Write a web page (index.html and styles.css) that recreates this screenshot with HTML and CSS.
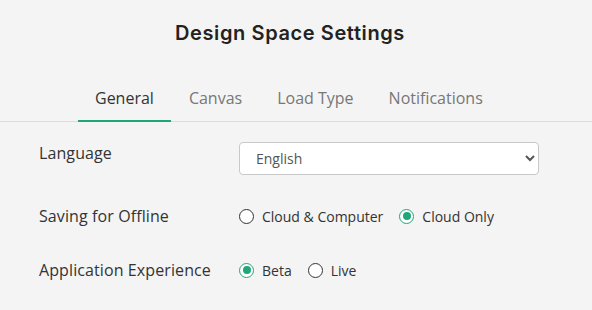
FILE: index.html
```html
<!DOCTYPE html>
<html lang="en">
<head>
<meta charset="utf-8">
<title>Design Space Settings</title>
<link rel="stylesheet" href="styles.css">
</head>
<body>
<div class="page">
  <h1 class="title">Design Space Settings</h1>
  <nav class="tabs">
    <a class="tab tab-active">General</a>
    <a class="tab">Canvas</a>
    <a class="tab">Load Type</a>
    <a class="tab">Notifications</a>
  </nav>
  <form class="form">
    <div class="row row-lang">
      <label class="label label-top" for="lang">Language</label>
      <select id="lang" class="select">
        <option>English</option>
      </select>
    </div>
    <div class="row row-save">
      <span class="label">Saving for Offline</span>
      <div class="options">
        <label class="option"><input type="radio" name="save" class="radio"><span>Cloud &amp; Computer</span></label>
        <label class="option"><input type="radio" name="save" class="radio" checked><span>Cloud Only</span></label>
      </div>
    </div>
    <div class="row row-exp">
      <span class="label">Application Experience</span>
      <div class="options">
        <label class="option"><input type="radio" name="exp" class="radio" checked><span>Beta</span></label>
        <label class="option"><input type="radio" name="exp" class="radio"><span>Live</span></label>
      </div>
    </div>
  </form>
</div>
</body>
</html>
```

FILE: styles.css
```css
html, body {
  margin: 0;
  padding: 0;
  background: #f4f4f4;
}
body {
  font-family: "Open Sans", "Noto Sans", sans-serif;
  color: #333;
}
.page {
  width: 592px;
  height: 310px;
  overflow: hidden;
}
.title {
  margin: 0;
  padding: 20px 12px 0 0;
  font-family: Inter, "Noto Sans", sans-serif;
  font-weight: 600;
  font-size: 20px;
  line-height: 26px;
  text-align: center;
  color: #222;
  letter-spacing: 0.6px;
}
.tabs {
  display: flex;
  margin-top: 42px;
  padding-left: 78px;
  border-bottom: 1px solid #dcdcdc;
}
.tab {
  display: block;
  padding: 0 17px 12px;
  font-size: 16px;
  line-height: 20px;
  color: #777;
  border-bottom: 2px solid transparent;
  margin-bottom: -1px;
  cursor: pointer;
}
.tab + .tab {
  margin-left: 1px;
}
.tab-active {
  color: #333;
  border-bottom-color: #21a67a;
}
.form {
  padding: 20px 0 0 39px;
}
.row {
  display: flex;
  align-items: center;
}
.row-save {
  margin-top: 31px;
  height: 20px;
}
.row-exp {
  margin-top: 34px;
  height: 20px;
}
.label {
  width: 200px;
  flex: none;
  font-size: 16px;
  line-height: 22px;
  color: #333;
  letter-spacing: 0.1px;
}
.label-top {
  align-self: flex-start;
}
.select {
  width: 300px;
  height: 33px;
  box-sizing: border-box;
  border: 1px solid #c8c8c8;
  border-radius: 4px;
  background: #fff;
  padding: 0 12px;
  font-family: "Open Sans", "Noto Sans", sans-serif;
  font-size: 14px;
  color: #555;
}
.options {
  display: flex;
  align-items: center;
  gap: 16px;
}
.option {
  display: flex;
  align-items: center;
  gap: 8px;
  font-size: 14px;
  color: #333;
}
.radio {
  appearance: none;
  -webkit-appearance: none;
  margin: 0;
  width: 15px;
  height: 15px;
  box-sizing: border-box;
  border: 1.5px solid #333;
  border-radius: 50%;
  background: #fff;
  display: grid;
  place-content: center;
}
.radio:checked {
  border-color: #21a67a;
}
.radio:checked::before {
  content: "";
  width: 8px;
  height: 8px;
  border-radius: 50%;
  background: #21a67a;
}
```
